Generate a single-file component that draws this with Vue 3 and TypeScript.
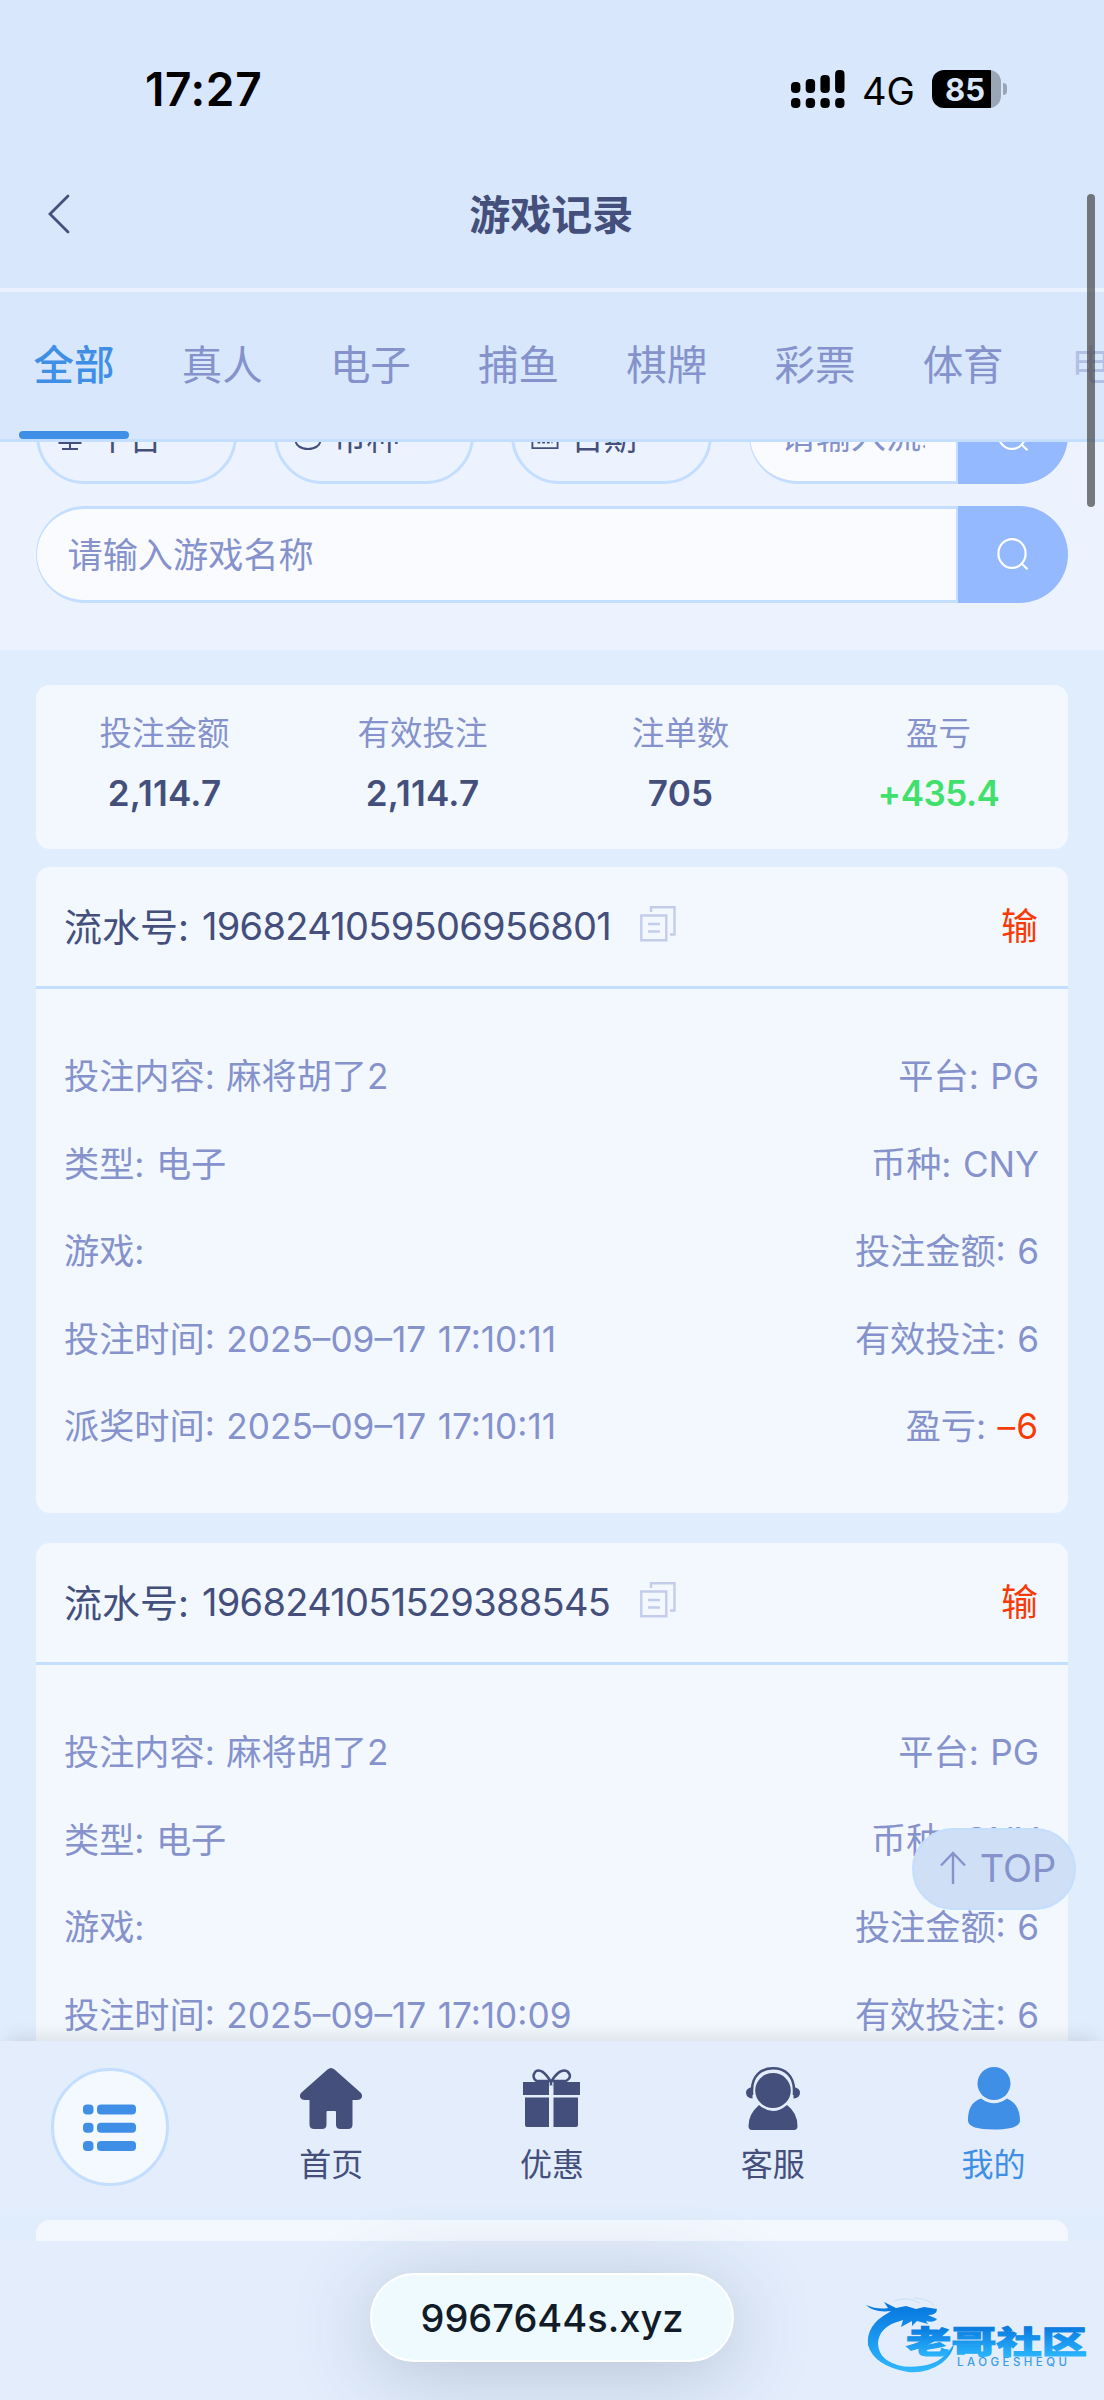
<template>
  <div class="page">
    <div class="status-bar">
      <span class="status-bar__time">17:27</span>
      <div class="status-bar__right">
        <svg class="signal" width="54" height="38" viewBox="0 0 54 38">
          <rect
            v-for="(bar, index) in signalBars"
            :key="index"
            :x="index * 14.7"
            :y="23 - bar"
            width="9.4"
            :height="bar"
            rx="4"
          />
          <rect v-for="index in 4" :key="'dot' + index" :x="(index - 1) * 14.7" y="28" width="9.4" height="10" rx="4" />
        </svg>
        <span class="status-bar__network">4G</span>
        <div class="battery">
          <div class="battery__body"><span>85</span></div>
          <div class="battery__cap"></div>
        </div>
      </div>
    </div>

    <header class="header">
      <svg class="header__back" width="24" height="42" viewBox="0 0 24 42">
        <path d="M21 3L3 21l18 18" fill="none" stroke="currentColor" stroke-width="2.8" stroke-linecap="round" />
      </svg>
      <h1>游戏记录</h1>
    </header>

    <nav class="tabs">
      <div
        v-for="(tab, index) in tabs"
        :key="index"
        class="tabs__item"
        :class="{ 'tabs__item--active': index === activeTab, 'tabs__item--faded': index === tabs.length - 1 }"
      >
        {{ tab }}
      </div>
    </nav>

    <main class="content">
      <section class="filters">
        <div class="filters__row">
          <div class="filter-pill">
            <svg width="28" height="30" viewBox="0 0 28 30">
              <path d="M5 3h18v14H5zM14 17v11M2.500 22h23M6 28h16" />
            </svg>
            平台
          </div>
          <div class="filter-pill">
            <svg width="28" height="30" viewBox="0 0 28 30">
              <ellipse cx="14" cy="11" rx="12.500" ry="7" />
              <path d="M1.500 11v8c0 5 5 9 12.500 9s12.500-4 12.500-9v-8" />
            </svg>
            币种
          </div>
          <div class="filter-pill">
            <svg width="28" height="30" viewBox="0 0 30 30">
              <path d="M1.500 5h27v23h-27zM1.500 12h27M8 1v7M22 1v7" />
              <path d="M7 22h16" stroke-dasharray="3 2" />
            </svg>
            日期
          </div>
          <div class="search search--small">
            <div class="search__input"><span>请输入流水号</span></div>
            <div class="search__button">
              <svg width="32" height="32" viewBox="0 0 32 32"><ellipse cx="15" cy="15.500" rx="13.600" ry="14.400" /><path d="M24.500 25.500l6 5.700" /></svg>
            </div>
          </div>
        </div>
        <div class="search">
          <div class="search__input"><span>请输入游戏名称</span></div>
          <div class="search__button">
            <svg width="32" height="32" viewBox="0 0 32 32"><ellipse cx="15" cy="15.500" rx="13.600" ry="14.400" /><path d="M24.500 25.500l6 5.700" /></svg>
          </div>
        </div>
      </section>

      <section class="summary">
        <div v-for="item in summary" :key="item.label" class="summary__item">
          <span class="summary__label">{{ item.label }}</span>
          <span class="summary__value" :class="{ 'summary__value--win': item.win }">{{ item.value }}</span>
        </div>
      </section>

      <article v-for="record in records" :key="record.id" class="record">
        <div class="record__head">
          <span class="record__label">流水号:</span>
          <span class="record__id">{{ record.id }}</span>
          <svg class="record__copy" width="36" height="36" viewBox="0 0 36 36">
            <path d="M1.300 9.500h25v24.700h-25zM11 6V1.300h23.500v27.200h-4.500M8 18h12M8 25.500h12" />
          </svg>
          <span class="record__result">输</span>
        </div>
        <div class="record__body">
          <div v-for="(row, index) in record.rows" :key="index" class="record__row">
            <span>{{ row.left }}: <span>{{ row.leftValue }}</span></span>
            <span>{{ row.right }}: <span :class="{ 'record__text--lose': row.lose }">{{ row.rightValue }}</span></span>
          </div>
        </div>
      </article>
      <div class="record record--next"></div>

      <div class="to-top">
        <svg width="26" height="34" viewBox="0 0 26 34"><path d="M13 33V2M1 14.500L13 2l12 12.500" /></svg>
        <span>TOP</span>
      </div>

      <nav class="dock">
        <div class="dock__item">
          <div class="dock__menu">
            <svg width="54" height="48" viewBox="0 0 54 48">
              <template v-for="index in 3" :key="index">
                <rect x="0" :y="(index - 1) * 18.200 + 0.500" width="10.500" height="10" rx="4" />
                <rect x="14" :y="(index - 1) * 18.200 + 0.500" width="39" height="10" rx="4" />
              </template>
            </svg>
          </div>
        </div>
        <div class="dock__item">
          <svg width="64" height="64" viewBox="0 0 64 64">
            <path d="M28.500 3.500Q32 .500 35.500 3.500L61.500 26.500Q64 29 62.500 32 61.500 34 58 34H53.500V58.500Q53.500 63 49 63H41.500Q37 63 37 58.500V46Q37 45 36 45H28.500Q27.500 45 27.500 46V58.500Q27.500 63 23 63H15.500Q10.500 63 10.500 58.500V34H6Q2.500 34 1.500 32 0 29 2.500 26.500Z" />
          </svg>
          <span>首页</span>
        </div>
        <div class="dock__item">
          <svg width="64" height="64" viewBox="0 0 64 64">
            <path d="M3 16h26v13H3zM33.500 16H60v13H33.500zM5 31.500h24V61H7q-2 0-2-2zM33.500 31.500H58V59q0 2-2 2H33.500z" />
            <path class="line" d="M31 16Q22 1 15.500 5.500 11 11 16.500 15H31ZM31 16Q40 1 47.500 5.500 53 11 46 15H31Z" />
          </svg>
          <span>优惠</span>
        </div>
        <div class="dock__item">
          <svg width="64" height="64" viewBox="0 0 64 64">
            <ellipse cx="32" cy="24.500" rx="17.800" ry="17.500" />
            <path class="line" d="M11 29V24C11 10 20 2.300 32 2.300S53 10 53 24v5" />
            <path d="M11.500 21v11.500Q5 32 5 26.500 5 22 11.500 21zM52.500 21v11.500Q59 32 59 26.500 59 22 52.500 21zM18 39Q32 51 46 39 56.500 47 56.500 60 56.500 64 53 64H11Q7.500 64 7.500 60 7.500 48 18 39Z" />
          </svg>
          <span>客服</span>
        </div>
        <div class="dock__item dock__item--active">
          <svg width="64" height="64" viewBox="0 0 64 64">
            <ellipse cx="32" cy="17.500" rx="16.500" ry="16.500" />
            <path d="M19 32.500Q32 42 45 32.500 58 38 58 55 57 63.500 32 63.500T6 55Q5.500 37 19 32.500Z" />
          </svg>
          <span>我的</span>
        </div>
      </nav>
    </main>

    <footer class="address">
      <div class="address__pill">9967644s.xyz</div>
      <svg class="watermark" width="224" height="80" viewBox="0 0 224 80">
        <defs>
          <linearGradient id="mark" x1="0" y1="10" x2="0" y2="76" gradientUnits="userSpaceOnUse">
            <stop offset="0" stop-color="#0778df" />
            <stop offset="1" stop-color="#2fb8ff" />
          </linearGradient>
          <linearGradient id="markText" x1="0" y1="30" x2="0" y2="60" gradientUnits="userSpaceOnUse">
            <stop offset="0" stop-color="#0878de" />
            <stop offset="1" stop-color="#2ab4fc" />
          </linearGradient>
        </defs>
        <path
          fill="url(#mark)"
          d="M0 9Q12 14 22 12L18 6 30 12 40 10 50 13 58 11 71 13Q71 19 62 19L71 23Q68 27 60 25L62 28 51 25 46 30 46 25 35 31 37 24 28 27Q12 34 12 48 13 66 38 70.500 66 72 78 60 84 54 88 48 87 58 76 67 60 78 42 76 8 70 2 49 0 29 22 17L25 15Q8 17 0 9Z"
        />
        <path d="M28 5q14-5 26 2M48 2q16 1 20 8" fill="none" stroke="#cbdff5" stroke-width="1" />
        <text class="watermark__name" x="40" y="57" textLength="181" lengthAdjust="spacingAndGlyphs">老哥社区</text>
        <text class="watermark__latin" x="91" y="70" textLength="110">LAOGESHEQU</text>
      </svg>
    </footer>

    <div class="scrollbar"></div>
  </div>
</template>

<script setup lang="ts">
import { ref } from 'vue';

interface RecordRow {
  left: string;
  leftValue: string;
  right: string;
  rightValue: string;
  lose?: boolean;
}

const signalBars = [11, 14, 18, 23];
const tabs = ['全部', '真人', '电子', '捕鱼', '棋牌', '彩票', '体育', '电竞'];
const activeTab = ref(0);

const summary = [
  { label: '投注金额', value: '2,114.7' },
  { label: '有效投注', value: '2,114.7' },
  { label: '注单数', value: '705' },
  { label: '盈亏', value: '+435.4', win: true },
];

const makeRows = (time: string): RecordRow[] => [
  { left: '投注内容', leftValue: '麻将胡了2', right: '平台', rightValue: 'PG' },
  { left: '类型', leftValue: '电子', right: '币种', rightValue: 'CNY' },
  { left: '游戏', leftValue: '', right: '投注金额', rightValue: '6' },
  { left: '投注时间', leftValue: time, right: '有效投注', rightValue: '6' },
  { left: '派奖时间', leftValue: time, right: '盈亏', rightValue: '–6', lose: true },
];

const records = [
  { id: '1968241059506956801', rows: makeRows('2025–09–17 17:10:11') },
  { id: '1968241051529388545', rows: makeRows('2025–09–17 17:10:09') },
];
</script>

<style>
body {
  background: #e3edfc;
}
</style>

<style scoped>
.page {
  position: relative;
  width: 1104px;
  height: 2400px;
  overflow: hidden;
  display: flex;
  flex-direction: column;
  background: #d8e7fb;
  color: #8592cc;
  font-family: Inter, "Noto Sans CJK SC", sans-serif;
}

.page * {
  box-sizing: border-box;
}

.status-bar {
  flex: none;
  height: 170px;
  padding: 8px 97px 0 145px;
  display: flex;
  align-items: center;
  justify-content: space-between;
  color: #000;
}

.status-bar__time {
  font-size: 46px;
  font-weight: 600;
  line-height: 56px;
  letter-spacing: 0.6px;
}

.status-bar__right {
  display: flex;
  align-items: center;
  height: 38px;
}

.status-bar__network {
  width: 51px;
  margin: 3px 19px 0 17px;
  font-size: 38px;
}

.battery {
  display: flex;
  align-items: center;
}

.battery__body {
  width: 69px;
  height: 38px;
  border-radius: 12px;
  background: linear-gradient(90deg, #000 59px, #9aa6b5 59px);
  color: #d8e7fb;
  font-size: 31px;
  font-weight: 700;
  line-height: 39px;
  padding-left: 13px;
}

.battery__cap {
  width: 4px;
  height: 12px;
  margin-left: 2px;
  border-radius: 0 4px 4px 0;
  background: #9aa6b5;
}

.header {
  flex: none;
  height: 122px;
  padding: 0 48px 0 46.500px;
  display: flex;
  align-items: center;
  border-bottom: 4px solid #e9f2fe;
  color: #444f7b;
}

.header__back {
  flex: none;
  margin-top: -31px;
}

.header h1 {
  flex: 1;
  margin: -29px 24px 0 0;
  text-align: center;
  font-size: 41px;
  line-height: 60px;
  font-weight: 700;
}

.tabs {
  flex: none;
  height: 150px;
  display: flex;
  padding-left: 19px;
  gap: 38.200px;
  border-bottom: 3px solid #c3deff;
  overflow: hidden;
}

.tabs__item {
  flex: none;
  width: 110px;
  position: relative;
  display: flex;
  align-items: center;
  justify-content: center;
  font-size: 40.500px;
  padding-bottom: 7px;
}

.tabs__item--active {
  color: #408fe6;
  font-weight: 500;
}

.tabs__item--active::after {
  content: "";
  position: absolute;
  left: 0;
  right: 0;
  bottom: 0;
  height: 8px;
  border-radius: 4px;
  background: #408fe6;
}

.tabs__item--faded {
  opacity: 0.45;
}

.content {
  position: relative;
  flex: none;
  height: 1799px;
  overflow: hidden;
  background: #e0edfd;
}

.filters {
  display: flow-root;
  height: 208px;
  padding: 0 36px;
  background: #ecf3ff;
}

/* first row is scrolled half way under the tabs */
.filters__row {
  display: flex;
  gap: 37px;
  margin-top: -55px;
  margin-bottom: 22px;
}

.filter-pill {
  width: 200.500px;
  height: 97px;
  padding: 0 0 0 17px;
  display: flex;
  align-items: center;
  gap: 12px;
  border: 3px solid #c3deff;
  border-radius: 49px;
  font-size: 33px;
  color: #444f7b;
}

.filter-pill svg {
  fill: none;
  stroke: currentColor;
  stroke-width: 2;
}

.search {
  display: flex;
  height: 97px;
}

.search--small {
  width: 319px;
}

.search__input {
  flex: 1;
  min-width: 0;
  display: flex;
  align-items: center;
  padding: 0 31px 4px 30.500px;
  border: 3px solid #c3deff;
  border-left-width: 1px;
  border-right-width: 2px;
  border-radius: 49px 0 0 49px;
  background: #fafbff;
  font-size: 35.200px;
}

.search--small .search__input {
  padding-left: 31px;
}

.search__input span {
  overflow: hidden;
  white-space: nowrap;
}

.search__button {
  flex: none;
  width: 110px;
  padding-bottom: 2px;
  display: flex;
  align-items: center;
  justify-content: center;
  border-radius: 0 49px 49px 0;
  background: #94b9ff;
}

.search__button svg {
  fill: none;
  stroke: #fff;
  stroke-width: 2.200;
}

.summary {
  display: flex;
  height: 164px;
  margin: 35px 36px 18px;
  border-radius: 14px;
  background: #f3f8ff;
}

.summary__item {
  flex: 1;
  display: flex;
  flex-direction: column;
  align-items: center;
  padding-top: 25px;
  padding-right: 1px;
  gap: 11px;
}

.summary__label {
  font-size: 32.500px;
  line-height: 48px;
}

.summary__value {
  font-size: 35px;
  line-height: 48px;
  font-weight: 600;
  letter-spacing: 0.2px;
  color: #444f7b;
}

.summary__value--win {
  color: #3fe16c;
  letter-spacing: -0.5px;
}

.record {
  height: 646px;
  margin: 0 36px 30px;
  border-radius: 14px;
  background: #f3f8ff;
}

.record__head {
  display: flex;
  align-items: center;
  height: 122px;
  padding: 0 30px 5px 28px;
  border-bottom: 3px solid #c3deff;
  color: #444f7b;
  font-size: 38px;
}

.record__label {
  width: 138px;
  white-space: nowrap;
}

.record__id {
  width: 411px;
  margin-top: 3px;
  white-space: nowrap;
  letter-spacing: -0.700px;
}

.record__copy {
  margin-left: 27px;
  margin-top: -1px;
  fill: none;
  stroke: #c3cdeb;
  stroke-width: 2.400;
}

.record__result {
  margin-left: auto;
  color: #f83a06;
  font-size: 37px;
}

.record__body {
  padding: 41px 29px 0 28px;
}

.record__row {
  display: flex;
  justify-content: space-between;
  align-items: center;
  height: 87.500px;
  font-size: 35.200px;
  word-spacing: 1.500px;
  white-space: nowrap;
}

.record__text--lose {
  color: #f83a06;
  letter-spacing: 1px;
}

.record--next {
  margin-top: 31px;
}

.to-top {
  position: absolute;
  top: 1386px;
  left: 912px;
  width: 164px;
  height: 82px;
  padding: 0 0 3px 8px;
  display: flex;
  align-items: center;
  justify-content: center;
  gap: 14px;
  border: 2px solid #c3deff;
  border-radius: 41px;
  background: #cfdff5;
  font-size: 38px;
}

.to-top svg {
  fill: none;
  stroke: currentColor;
  stroke-width: 2.400;
}

.dock {
  position: absolute;
  top: 1599px;
  left: 0;
  width: 1104px;
  height: 179px;
  display: flex;
  background: linear-gradient(#e3edfc 165px, #e0edfd 178px);
  box-shadow: 0 -12px 16px -8px rgba(90, 90, 90, 0.16);
  color: #444f7b;
}

.dock__item {
  flex: 1;
  display: flex;
  flex-direction: column;
  align-items: center;
  padding-top: 25px;
  font-size: 32px;
  line-height: 48px;
}

.dock__item svg {
  fill: currentColor;
}

.dock__item .line {
  fill: none;
  stroke: currentColor;
  stroke-width: 2.500;
}

.dock__item span {
  margin-top: 11px;
}

.dock__item--active {
  color: #408fe6;
}

.dock__menu {
  width: 118px;
  height: 118px;
  margin-top: 2px;
  display: flex;
  align-items: center;
  justify-content: center;
  border: 3px solid #c3deff;
  border-radius: 50%;
  background: #f4f8ff;
  color: #408fe6;
}

.dock__menu svg {
  margin-top: 2px;
}

.address {
  position: relative;
  flex: none;
  height: 159px;
  padding-top: 32px;
  display: flex;
  align-items: flex-start;
  justify-content: center;
  background: #e3edfc;
}

.address__pill {
  width: 364px;
  height: 89px;
  border: 2px solid #fff;
  border-radius: 45px;
  background: #effaff;
  box-shadow: 0 12px 80px rgba(60, 80, 100, 0.27);
  color: #121c28;
  font-size: 38px;
  font-weight: 500;
  line-height: 87px;
  text-align: center;
}

.watermark {
  position: absolute;
  top: 55px;
  left: 866px;
}

.watermark__name {
  fill: url(#markText);
  stroke: url(#markText);
  stroke-width: 1px;
  font-size: 31px;
  font-weight: 900;
}

.watermark__latin {
  fill: #3c9ee9;
  font-size: 11.500px;
  font-weight: 500;
}

.scrollbar {
  position: absolute;
  top: 194px;
  right: 9px;
  width: 8px;
  height: 313px;
  border-radius: 4px;
  background: rgba(70, 70, 70, 0.7);
}
</style>
